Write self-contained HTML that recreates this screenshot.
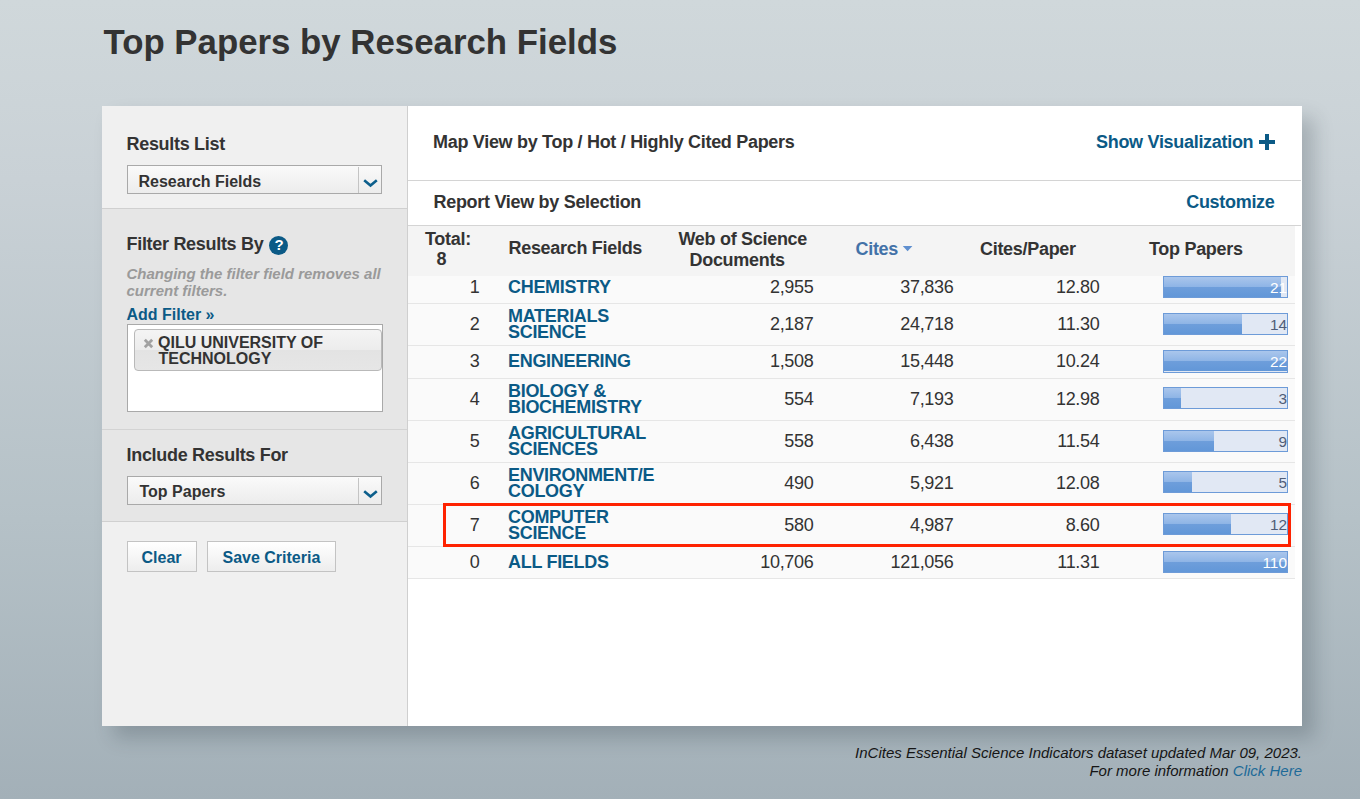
<!DOCTYPE html>
<html><head><meta charset="utf-8"><title>Top Papers by Research Fields</title>
<style>
html,body{margin:0;padding:0;}
body{width:1360px;height:799px;overflow:hidden;position:relative;
 background:linear-gradient(to bottom,#d0d8db 0px,#c9d1d6 180px,#b5c1c7 520px,#a3b0b8 799px);
 font-family:"Liberation Sans",sans-serif;}
.t{position:absolute;white-space:nowrap;}
.b{position:absolute;box-sizing:border-box;}
</style></head><body>
<div class="t" style="left:103.5px;top:22px;font-size:34.8px;line-height:39px;font-weight:bold;color:#333;font-style:normal;">Top Papers by Research Fields</div>
<div class="b" style="left:102px;top:106px;width:1200px;height:620px;background:#fff;box-shadow:12px 12px 18px rgba(30,45,55,.22);"></div>
<div class="b" style="left:102px;top:106px;width:306px;height:620px;background:#f0f0f0;border-right:1px solid #cfcfcf;"></div>
<div class="b" style="left:102px;top:208px;width:305px;height:314px;background:#e6e6e6;border-top:1px solid #d0d0d0;border-bottom:1px solid #d0d0d0;"></div>
<div class="b" style="left:102px;top:429px;width:305px;height:1px;background:#d3d3d3;"></div>
<div class="t" style="left:126.5px;top:134px;font-size:18px;line-height:20px;font-weight:bold;color:#333;font-style:normal;letter-spacing:-0.3px;">Results List</div>
<div class="b" style="left:127px;top:165px;width:255px;height:29px;border:1px solid #a9a9a9;background:linear-gradient(#fafafa,#ececec);"></div>
<div class="b" style="left:358px;top:167px;width:1px;height:26px;background:#c4c4c4;"></div>
<svg style="position:absolute;left:362.5px;top:179px" width="15" height="9" viewBox="0 0 15 9"><path d="M1.2 1.3 L7.5 6.6 L13.8 1.3" fill="none" stroke="#0d5f8c" stroke-width="2.6"/></svg>
<div class="t" style="left:138.5px;top:173px;font-size:16px;line-height:17px;font-weight:bold;color:#333;font-style:normal;">Research Fields</div>
<div class="t" style="left:126.5px;top:234px;font-size:18px;line-height:20px;font-weight:bold;color:#333;font-style:normal;letter-spacing:-0.3px;">Filter Results By</div>
<div class="b" style="left:269px;top:236px;width:19px;height:19px;border-radius:50%;background:#0b5a86;"></div>
<div class="t" style="left:269.5px;top:236px;font-size:15px;line-height:17px;font-weight:bold;color:#fff;font-style:normal;width:19px;text-align:center;">?</div>
<div class="t" style="left:126.5px;top:265px;font-size:15px;line-height:17px;font-weight:bold;color:#9a9a9a;font-style:italic;">Changing the filter field removes all</div>
<div class="t" style="left:126.5px;top:282px;font-size:15px;line-height:17px;font-weight:bold;color:#9a9a9a;font-style:italic;">current filters.</div>
<div class="t" style="left:126.5px;top:306px;font-size:16px;line-height:17px;font-weight:bold;color:#0b5a86;font-style:normal;">Add Filter &raquo;</div>
<div class="b" style="left:127px;top:324px;width:256px;height:88px;background:#fff;border:1px solid #a9a9a9;"></div>
<div class="b" style="left:134px;top:329px;width:248px;height:42px;border:1px solid #b9b9b9;border-radius:4px;background:linear-gradient(#f4f4f4 0%,#ececec 50%,#e3e3e3 51%,#e6e6e6 100%);"></div>
<svg style="position:absolute;left:143px;top:338px" width="11" height="11" viewBox="0 0 11 11"><path d="M1.8 1.8 L9.2 9.2 M9.2 1.8 L1.8 9.2" stroke="#a2a2a2" stroke-width="2.8"/></svg>
<div class="t" style="left:158px;top:334px;font-size:16px;line-height:17px;font-weight:bold;color:#333;font-style:normal;">QILU UNIVERSITY OF</div>
<div class="t" style="left:158.5px;top:350px;font-size:16px;line-height:17px;font-weight:bold;color:#333;font-style:normal;">TECHNOLOGY</div>
<div class="t" style="left:126.5px;top:445px;font-size:18px;line-height:20px;font-weight:bold;color:#333;font-style:normal;letter-spacing:-0.3px;">Include Results For</div>
<div class="b" style="left:127px;top:476px;width:255px;height:29px;border:1px solid #a9a9a9;background:linear-gradient(#fafafa,#ececec);"></div>
<div class="b" style="left:358px;top:478px;width:1px;height:26px;background:#c4c4c4;"></div>
<svg style="position:absolute;left:362.5px;top:490px" width="15" height="9" viewBox="0 0 15 9"><path d="M1.2 1.3 L7.5 6.6 L13.8 1.3" fill="none" stroke="#0d5f8c" stroke-width="2.6"/></svg>
<div class="t" style="left:139.5px;top:483px;font-size:16px;line-height:17px;font-weight:bold;color:#333;font-style:normal;">Top Papers</div>
<div class="b" style="left:127px;top:541px;width:70px;height:31px;border:1px solid #c3c3c3;background:linear-gradient(#ffffff,#ededed);"></div>
<div class="t" style="left:141.5px;top:549px;font-size:16px;line-height:17px;font-weight:bold;color:#0b5a86;font-style:normal;">Clear</div>
<div class="b" style="left:207px;top:541px;width:129px;height:31px;border:1px solid #c3c3c3;background:linear-gradient(#ffffff,#ededed);"></div>
<div class="t" style="left:222.5px;top:549px;font-size:16px;line-height:17px;font-weight:bold;color:#0b5a86;font-style:normal;">Save Criteria</div>
<div class="t" style="left:433px;top:132px;font-size:18px;line-height:20px;font-weight:bold;color:#333;font-style:normal;letter-spacing:-0.3px;">Map View by Top / Hot / Highly Cited Papers</div>
<div class="t" style="left:1096px;top:132px;font-size:18px;line-height:20px;font-weight:bold;color:#0b5a86;font-style:normal;letter-spacing:-0.3px;">Show Visualization</div>
<div class="b" style="left:1259px;top:140px;width:16px;height:4px;background:#0b5a86;"></div>
<div class="b" style="left:1265px;top:134px;width:4px;height:16px;background:#0b5a86;"></div>
<div class="b" style="left:408px;top:180px;width:893px;height:1px;background:#d4d4d4;"></div>
<div class="t" style="left:433.5px;top:192px;font-size:18px;line-height:20px;font-weight:bold;color:#333;font-style:normal;letter-spacing:-0.3px;">Report View by Selection</div>
<div class="t" style="right:85.5px;text-align:right;top:192px;font-size:18px;line-height:20px;font-weight:bold;color:#0b5a86;font-style:normal;letter-spacing:-0.3px;">Customize</div>
<div class="b" style="left:408px;top:225px;width:893px;height:1px;background:#d4d4d4;"></div>
<div class="b" style="left:408px;top:226px;width:887px;height:50px;background:#f4f4f4;"></div>
<div class="t" style="left:425px;top:229px;font-size:18px;line-height:20px;font-weight:bold;color:#333;font-style:normal;letter-spacing:-0.3px;">Total:</div>
<div class="t" style="left:436.5px;top:249px;font-size:18px;line-height:20px;font-weight:bold;color:#333;font-style:normal;letter-spacing:-0.3px;">8</div>
<div class="t" style="left:508.5px;top:238px;font-size:18px;line-height:20px;font-weight:bold;color:#333;font-style:normal;letter-spacing:-0.3px;">Research Fields</div>
<div class="t" style="left:678.5px;top:229px;font-size:18px;line-height:20px;font-weight:bold;color:#333;font-style:normal;letter-spacing:-0.3px;">Web of Science</div>
<div class="t" style="left:689.5px;top:250px;font-size:18px;line-height:20px;font-weight:bold;color:#333;font-style:normal;letter-spacing:-0.3px;">Documents</div>
<div class="t" style="left:855.5px;top:239px;font-size:18px;line-height:20px;font-weight:bold;color:#4272a8;font-style:normal;letter-spacing:-0.3px;">Cites</div>
<svg style="position:absolute;left:902px;top:246px" width="11" height="7" viewBox="0 0 11 7"><path d="M0.8 0 L10.4 0 L5.6 5.3 Z" fill="#5f8fcf"/></svg>
<div class="t" style="left:980px;top:239px;font-size:18px;line-height:20px;font-weight:bold;color:#333;font-style:normal;letter-spacing:-0.3px;">Cites/Paper</div>
<div class="t" style="left:1149px;top:239px;font-size:18px;line-height:20px;font-weight:bold;color:#333;font-style:normal;letter-spacing:-0.3px;">Top Papers</div>
<div class="b" style="left:408px;top:276px;width:887px;height:27px;background:#fafafa;"></div>
<div class="b" style="left:408px;top:303px;width:887px;height:1px;background:#e6e6e6;"></div>
<div class="t" style="left:508px;top:277px;font-size:18px;line-height:20px;font-weight:bold;color:#0b5a86;font-style:normal;letter-spacing:-0.3px;">CHEMISTRY</div>
<div class="t" style="right:880.5px;text-align:right;top:277px;font-size:18px;line-height:20px;font-weight:normal;color:#333;font-style:normal;letter-spacing:-0.3px;">1</div>
<div class="t" style="right:546.5px;text-align:right;top:277px;font-size:18px;line-height:20px;font-weight:normal;color:#333;font-style:normal;letter-spacing:-0.3px;">2,955</div>
<div class="t" style="right:406.5px;text-align:right;top:277px;font-size:18px;line-height:20px;font-weight:normal;color:#333;font-style:normal;letter-spacing:-0.3px;">37,836</div>
<div class="t" style="right:260.5px;text-align:right;top:277px;font-size:18px;line-height:20px;font-weight:normal;color:#333;font-style:normal;letter-spacing:-0.3px;">12.80</div>
<div class="b" style="left:1163px;top:276px;width:125px;height:22px;border:1px solid #6d9bd8;background:#e1e8f4;"></div>
<div class="b" style="left:1164px;top:277px;width:117px;height:20px;background:linear-gradient(#aac6ec 0%,#8fb5e6 48%,#6e9edb 50%,#6297d8 100%);"></div>
<div class="t" style="right:73px;text-align:right;top:279px;font-size:15.4px;line-height:17px;font-weight:normal;color:#fff;font-style:normal;">21</div>
<div class="b" style="left:408px;top:304px;width:887px;height:41px;background:#fafafa;"></div>
<div class="b" style="left:408px;top:345px;width:887px;height:1px;background:#e6e6e6;"></div>
<div class="t" style="left:508px;top:306px;font-size:18px;line-height:20px;font-weight:bold;color:#0b5a86;font-style:normal;letter-spacing:-0.3px;">MATERIALS</div>
<div class="t" style="left:508px;top:322px;font-size:18px;line-height:20px;font-weight:bold;color:#0b5a86;font-style:normal;letter-spacing:-0.3px;">SCIENCE</div>
<div class="t" style="right:880.5px;text-align:right;top:314px;font-size:18px;line-height:20px;font-weight:normal;color:#333;font-style:normal;letter-spacing:-0.3px;">2</div>
<div class="t" style="right:546.5px;text-align:right;top:314px;font-size:18px;line-height:20px;font-weight:normal;color:#333;font-style:normal;letter-spacing:-0.3px;">2,187</div>
<div class="t" style="right:406.5px;text-align:right;top:314px;font-size:18px;line-height:20px;font-weight:normal;color:#333;font-style:normal;letter-spacing:-0.3px;">24,718</div>
<div class="t" style="right:260.5px;text-align:right;top:314px;font-size:18px;line-height:20px;font-weight:normal;color:#333;font-style:normal;letter-spacing:-0.3px;">11.30</div>
<div class="b" style="left:1163px;top:313px;width:125px;height:22px;border:1px solid #6d9bd8;background:#e1e8f4;"></div>
<div class="b" style="left:1164px;top:314px;width:78px;height:20px;background:linear-gradient(#aac6ec 0%,#8fb5e6 48%,#6e9edb 50%,#6297d8 100%);"></div>
<div class="t" style="right:73px;text-align:right;top:316px;font-size:15.4px;line-height:17px;font-weight:normal;color:#4f5d78;font-style:normal;">14</div>
<div class="b" style="left:408px;top:346px;width:887px;height:32px;background:#fafafa;"></div>
<div class="b" style="left:408px;top:378px;width:887px;height:1px;background:#e6e6e6;"></div>
<div class="t" style="left:508px;top:351px;font-size:18px;line-height:20px;font-weight:bold;color:#0b5a86;font-style:normal;letter-spacing:-0.3px;">ENGINEERING</div>
<div class="t" style="right:880.5px;text-align:right;top:351px;font-size:18px;line-height:20px;font-weight:normal;color:#333;font-style:normal;letter-spacing:-0.3px;">3</div>
<div class="t" style="right:546.5px;text-align:right;top:351px;font-size:18px;line-height:20px;font-weight:normal;color:#333;font-style:normal;letter-spacing:-0.3px;">1,508</div>
<div class="t" style="right:406.5px;text-align:right;top:351px;font-size:18px;line-height:20px;font-weight:normal;color:#333;font-style:normal;letter-spacing:-0.3px;">15,448</div>
<div class="t" style="right:260.5px;text-align:right;top:351px;font-size:18px;line-height:20px;font-weight:normal;color:#333;font-style:normal;letter-spacing:-0.3px;">10.24</div>
<div class="b" style="left:1163px;top:350px;width:125px;height:23px;border:1px solid #6d9bd8;background:#e1e8f4;"></div>
<div class="b" style="left:1164px;top:351px;width:123px;height:20px;background:linear-gradient(#aac6ec 0%,#8fb5e6 48%,#6e9edb 50%,#6297d8 100%);"></div>
<div class="t" style="right:73px;text-align:right;top:353px;font-size:15.4px;line-height:17px;font-weight:normal;color:#fff;font-style:normal;">22</div>
<div class="b" style="left:408px;top:379px;width:887px;height:41px;background:#fafafa;"></div>
<div class="b" style="left:408px;top:420px;width:887px;height:1px;background:#e6e6e6;"></div>
<div class="t" style="left:508px;top:381px;font-size:18px;line-height:20px;font-weight:bold;color:#0b5a86;font-style:normal;letter-spacing:-0.3px;">BIOLOGY &amp;</div>
<div class="t" style="left:508px;top:397px;font-size:18px;line-height:20px;font-weight:bold;color:#0b5a86;font-style:normal;letter-spacing:-0.3px;">BIOCHEMISTRY</div>
<div class="t" style="right:880.5px;text-align:right;top:389px;font-size:18px;line-height:20px;font-weight:normal;color:#333;font-style:normal;letter-spacing:-0.3px;">4</div>
<div class="t" style="right:546.5px;text-align:right;top:389px;font-size:18px;line-height:20px;font-weight:normal;color:#333;font-style:normal;letter-spacing:-0.3px;">554</div>
<div class="t" style="right:406.5px;text-align:right;top:389px;font-size:18px;line-height:20px;font-weight:normal;color:#333;font-style:normal;letter-spacing:-0.3px;">7,193</div>
<div class="t" style="right:260.5px;text-align:right;top:389px;font-size:18px;line-height:20px;font-weight:normal;color:#333;font-style:normal;letter-spacing:-0.3px;">12.98</div>
<div class="b" style="left:1163px;top:387px;width:125px;height:22px;border:1px solid #6d9bd8;background:#e1e8f4;"></div>
<div class="b" style="left:1164px;top:388px;width:17px;height:20px;background:linear-gradient(#aac6ec 0%,#8fb5e6 48%,#6e9edb 50%,#6297d8 100%);"></div>
<div class="t" style="right:73px;text-align:right;top:390px;font-size:15.4px;line-height:17px;font-weight:normal;color:#4f5d78;font-style:normal;">3</div>
<div class="b" style="left:408px;top:421px;width:887px;height:41px;background:#fafafa;"></div>
<div class="b" style="left:408px;top:462px;width:887px;height:1px;background:#e6e6e6;"></div>
<div class="t" style="left:508px;top:423px;font-size:18px;line-height:20px;font-weight:bold;color:#0b5a86;font-style:normal;letter-spacing:-0.3px;">AGRICULTURAL</div>
<div class="t" style="left:508px;top:439px;font-size:18px;line-height:20px;font-weight:bold;color:#0b5a86;font-style:normal;letter-spacing:-0.3px;">SCIENCES</div>
<div class="t" style="right:880.5px;text-align:right;top:431px;font-size:18px;line-height:20px;font-weight:normal;color:#333;font-style:normal;letter-spacing:-0.3px;">5</div>
<div class="t" style="right:546.5px;text-align:right;top:431px;font-size:18px;line-height:20px;font-weight:normal;color:#333;font-style:normal;letter-spacing:-0.3px;">558</div>
<div class="t" style="right:406.5px;text-align:right;top:431px;font-size:18px;line-height:20px;font-weight:normal;color:#333;font-style:normal;letter-spacing:-0.3px;">6,438</div>
<div class="t" style="right:260.5px;text-align:right;top:431px;font-size:18px;line-height:20px;font-weight:normal;color:#333;font-style:normal;letter-spacing:-0.3px;">11.54</div>
<div class="b" style="left:1163px;top:430px;width:125px;height:22px;border:1px solid #6d9bd8;background:#e1e8f4;"></div>
<div class="b" style="left:1164px;top:431px;width:50px;height:20px;background:linear-gradient(#aac6ec 0%,#8fb5e6 48%,#6e9edb 50%,#6297d8 100%);"></div>
<div class="t" style="right:73px;text-align:right;top:433px;font-size:15.4px;line-height:17px;font-weight:normal;color:#4f5d78;font-style:normal;">9</div>
<div class="b" style="left:408px;top:463px;width:887px;height:41px;background:#fafafa;"></div>
<div class="b" style="left:408px;top:504px;width:887px;height:1px;background:#e6e6e6;"></div>
<div class="t" style="left:508px;top:465px;font-size:18px;line-height:20px;font-weight:bold;color:#0b5a86;font-style:normal;letter-spacing:-0.3px;">ENVIRONMENT/E</div>
<div class="t" style="left:508px;top:481px;font-size:18px;line-height:20px;font-weight:bold;color:#0b5a86;font-style:normal;letter-spacing:-0.3px;">COLOGY</div>
<div class="t" style="right:880.5px;text-align:right;top:473px;font-size:18px;line-height:20px;font-weight:normal;color:#333;font-style:normal;letter-spacing:-0.3px;">6</div>
<div class="t" style="right:546.5px;text-align:right;top:473px;font-size:18px;line-height:20px;font-weight:normal;color:#333;font-style:normal;letter-spacing:-0.3px;">490</div>
<div class="t" style="right:406.5px;text-align:right;top:473px;font-size:18px;line-height:20px;font-weight:normal;color:#333;font-style:normal;letter-spacing:-0.3px;">5,921</div>
<div class="t" style="right:260.5px;text-align:right;top:473px;font-size:18px;line-height:20px;font-weight:normal;color:#333;font-style:normal;letter-spacing:-0.3px;">12.08</div>
<div class="b" style="left:1163px;top:471px;width:125px;height:22px;border:1px solid #6d9bd8;background:#e1e8f4;"></div>
<div class="b" style="left:1164px;top:472px;width:28px;height:20px;background:linear-gradient(#aac6ec 0%,#8fb5e6 48%,#6e9edb 50%,#6297d8 100%);"></div>
<div class="t" style="right:73px;text-align:right;top:474px;font-size:15.4px;line-height:17px;font-weight:normal;color:#4f5d78;font-style:normal;">5</div>
<div class="b" style="left:408px;top:505px;width:887px;height:41px;background:#fafafa;"></div>
<div class="b" style="left:408px;top:546px;width:887px;height:1px;background:#e6e6e6;"></div>
<div class="t" style="left:508px;top:507px;font-size:18px;line-height:20px;font-weight:bold;color:#0b5a86;font-style:normal;letter-spacing:-0.3px;">COMPUTER</div>
<div class="t" style="left:508px;top:523px;font-size:18px;line-height:20px;font-weight:bold;color:#0b5a86;font-style:normal;letter-spacing:-0.3px;">SCIENCE</div>
<div class="t" style="right:880.5px;text-align:right;top:515px;font-size:18px;line-height:20px;font-weight:normal;color:#333;font-style:normal;letter-spacing:-0.3px;">7</div>
<div class="t" style="right:546.5px;text-align:right;top:515px;font-size:18px;line-height:20px;font-weight:normal;color:#333;font-style:normal;letter-spacing:-0.3px;">580</div>
<div class="t" style="right:406.5px;text-align:right;top:515px;font-size:18px;line-height:20px;font-weight:normal;color:#333;font-style:normal;letter-spacing:-0.3px;">4,987</div>
<div class="t" style="right:260.5px;text-align:right;top:515px;font-size:18px;line-height:20px;font-weight:normal;color:#333;font-style:normal;letter-spacing:-0.3px;">8.60</div>
<div class="b" style="left:1163px;top:513px;width:125px;height:22px;border:1px solid #6d9bd8;background:#e1e8f4;"></div>
<div class="b" style="left:1164px;top:514px;width:67px;height:20px;background:linear-gradient(#aac6ec 0%,#8fb5e6 48%,#6e9edb 50%,#6297d8 100%);"></div>
<div class="t" style="right:73px;text-align:right;top:516px;font-size:15.4px;line-height:17px;font-weight:normal;color:#4f5d78;font-style:normal;">12</div>
<div class="b" style="left:408px;top:547px;width:887px;height:31px;background:#fafafa;"></div>
<div class="b" style="left:408px;top:578px;width:887px;height:1px;background:#e6e6e6;"></div>
<div class="t" style="left:508px;top:552px;font-size:18px;line-height:20px;font-weight:bold;color:#0b5a86;font-style:normal;letter-spacing:-0.3px;">ALL FIELDS</div>
<div class="t" style="right:880.5px;text-align:right;top:552px;font-size:18px;line-height:20px;font-weight:normal;color:#333;font-style:normal;letter-spacing:-0.3px;">0</div>
<div class="t" style="right:546.5px;text-align:right;top:552px;font-size:18px;line-height:20px;font-weight:normal;color:#333;font-style:normal;letter-spacing:-0.3px;">10,706</div>
<div class="t" style="right:406.5px;text-align:right;top:552px;font-size:18px;line-height:20px;font-weight:normal;color:#333;font-style:normal;letter-spacing:-0.3px;">121,056</div>
<div class="t" style="right:260.5px;text-align:right;top:552px;font-size:18px;line-height:20px;font-weight:normal;color:#333;font-style:normal;letter-spacing:-0.3px;">11.31</div>
<div class="b" style="left:1163px;top:551px;width:125px;height:22px;border:1px solid #6d9bd8;background:#e1e8f4;"></div>
<div class="b" style="left:1164px;top:552px;width:123px;height:20px;background:linear-gradient(#aac6ec 0%,#8fb5e6 48%,#6e9edb 50%,#6297d8 100%);"></div>
<div class="t" style="right:73px;text-align:right;top:554px;font-size:15.4px;line-height:17px;font-weight:normal;color:#fff;font-style:normal;">110</div>
<div class="b" style="left:443px;top:503px;width:848px;height:44px;border:3px solid #fe2200;"></div>
<div class="t" style="right:58px;text-align:right;top:744px;font-size:15px;line-height:17px;font-weight:normal;color:#151515;font-style:italic;">InCites Essential Science Indicators dataset updated Mar 09, 2023.</div>
<div class="t" style="right:58px;text-align:right;top:762px;font-size:15px;line-height:17px;font-weight:normal;color:#151515;font-style:italic;">For more information <span style="color:#1d6a98">Click Here</span></div>
</body></html>
